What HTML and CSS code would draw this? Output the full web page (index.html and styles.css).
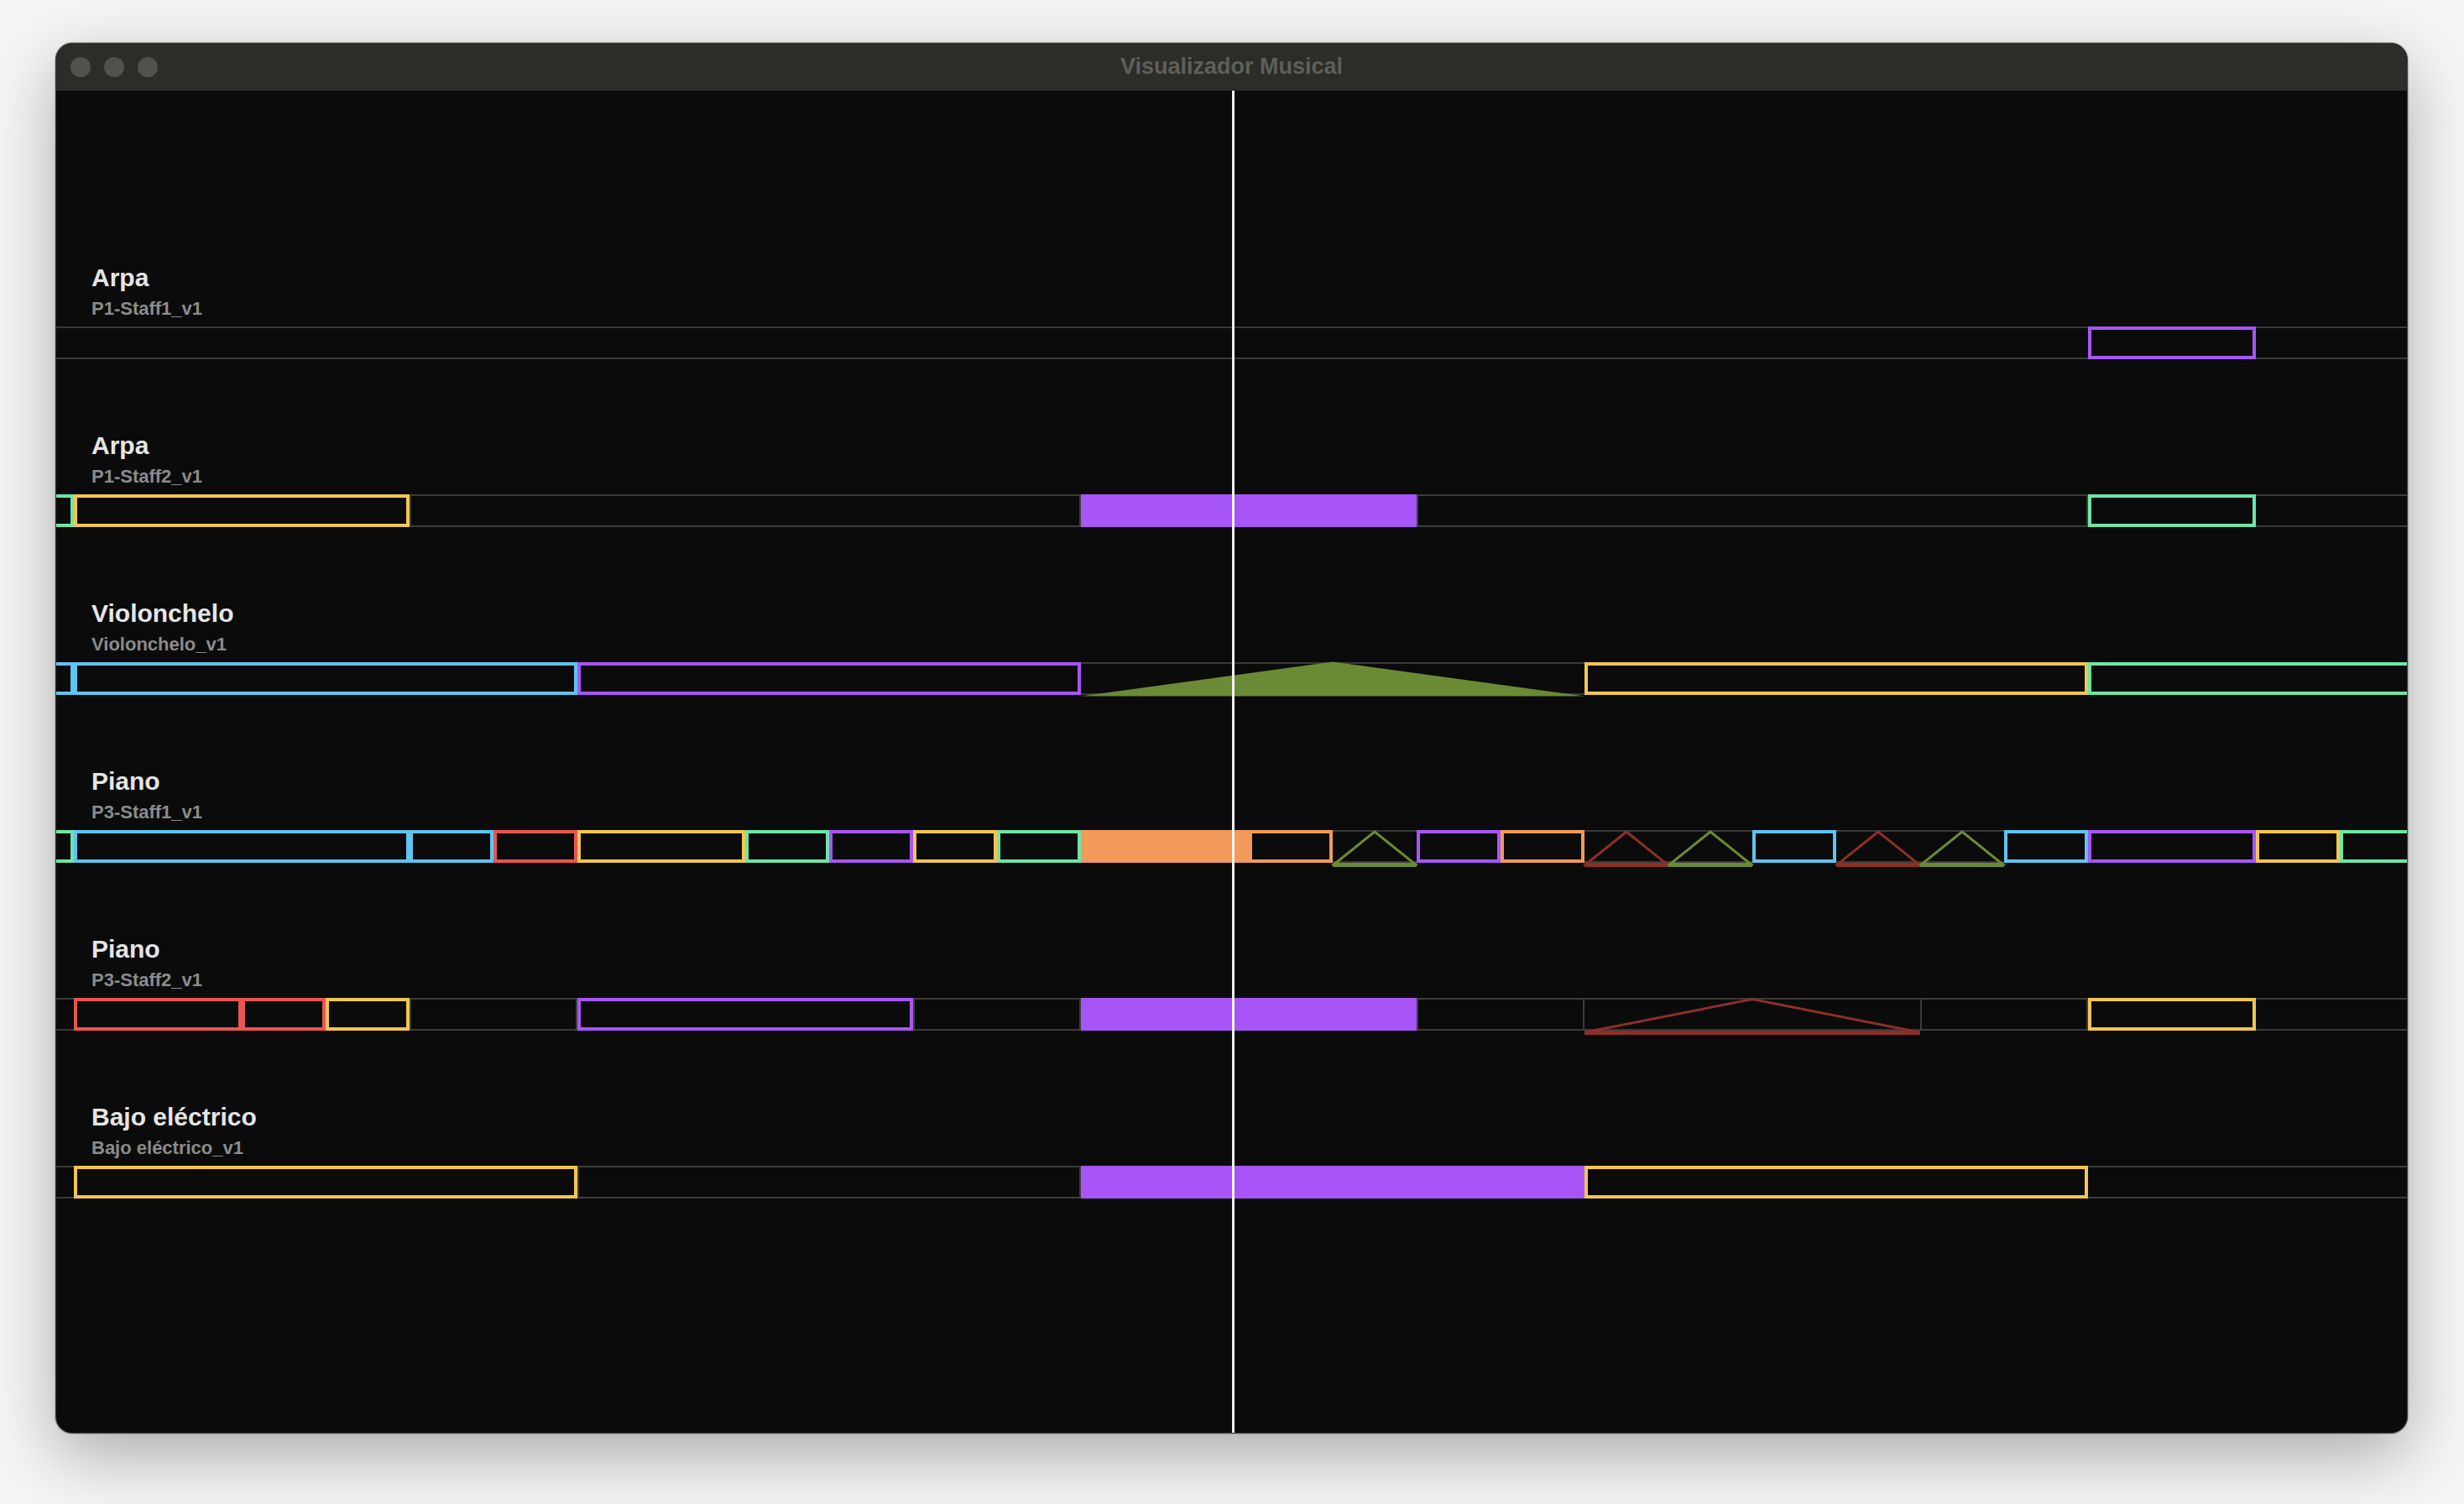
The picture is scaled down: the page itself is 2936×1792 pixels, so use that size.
FILE: index.html
```html
<!DOCTYPE html>
<html>
<head>
    <meta charset="UTF-8">
    <title>Visualizador Musical</title>
    <link rel="stylesheet" href="styles.css">
</head>
<body>
<div class="window">
    <div class="titlebar">
        <div class="lights"><span></span><span></span><span></span></div>
        <div class="title">Visualizador Musical</div>
        <div></div>
    </div>

    <div class="stage">
        <!-- cada pista: nombre, voz y la fila de notas (1 tiempo = 100px) -->
        <div class="track">
            <div class="name">Arpa</div>
            <div class="voice">P1-Staff1_v1</div>
            <div class="lane">
                <span class="lead"></span>
                <span class="gap" style="--n:24"></span>
                <span class="note purple" style="--n:2"></span>
            </div>
        </div>

        <div class="track">
            <div class="name">Arpa</div>
            <div class="voice">P1-Staff2_v1</div>
            <div class="lane">
                <span class="lead note mint"></span>
                <span class="note yellow" style="--n:4"></span>
                <span class="rest" style="--n:8"></span>
                <span class="note purple fill" style="--n:4"></span>
                <span class="rest" style="--n:8"></span>
                <span class="note mint" style="--n:2"></span>
            </div>
        </div>

        <div class="track">
            <div class="name">Violonchelo</div>
            <div class="voice">Violonchelo_v1</div>
            <div class="lane">
                <span class="lead note cyan"></span>
                <span class="note cyan" style="--n:6"></span>
                <span class="note purple" style="--n:6"></span>
                <span class="tri solid olive" style="--n:6"><svg width="600" height="39" viewBox="0 0 600 39"><polygon points="0,40.5 300,-0.5 600,40.5"/></svg></span>
                <span class="note yellow" style="--n:6"></span>
                <span class="note mint" style="--n:6"></span>
            </div>
        </div>

        <div class="track">
            <div class="name">Piano</div>
            <div class="voice">P3-Staff1_v1</div>
            <div class="lane">
                <span class="lead note mint"></span>
                <span class="note cyan" style="--n:4"></span>
                <span class="note cyan" style="--n:1"></span>
                <span class="note red" style="--n:1"></span>
                <span class="note yellow" style="--n:2"></span>
                <span class="note mint" style="--n:1"></span>
                <span class="note purple" style="--n:1"></span>
                <span class="note yellow" style="--n:1"></span>
                <span class="note mint" style="--n:1"></span>
                <span class="note orange fill" style="--n:2"></span>
                <span class="note orange" style="--n:1"></span>
                <span class="tri olive" style="--n:1"><svg width="100" height="39" viewBox="0 0 100 39"><polygon points="2,40.5 50,2 98,40.5"/><line x1="0" y1="41.5" x2="100" y2="41.5"/></svg></span>
                <span class="note purple" style="--n:1"></span>
                <span class="note orange" style="--n:1"></span>
                <span class="tri maroon" style="--n:1"><svg width="100" height="39" viewBox="0 0 100 39"><polygon points="2,40.5 50,2 98,40.5"/><line x1="0" y1="41.5" x2="100" y2="41.5"/></svg></span>
                <span class="tri olive" style="--n:1"><svg width="100" height="39" viewBox="0 0 100 39"><polygon points="2,40.5 50,2 98,40.5"/><line x1="0" y1="41.5" x2="100" y2="41.5"/></svg></span>
                <span class="note cyan" style="--n:1"></span>
                <span class="tri maroon" style="--n:1"><svg width="100" height="39" viewBox="0 0 100 39"><polygon points="2,40.5 50,2 98,40.5"/><line x1="0" y1="41.5" x2="100" y2="41.5"/></svg></span>
                <span class="tri olive" style="--n:1"><svg width="100" height="39" viewBox="0 0 100 39"><polygon points="2,40.5 50,2 98,40.5"/><line x1="0" y1="41.5" x2="100" y2="41.5"/></svg></span>
                <span class="note cyan" style="--n:1"></span>
                <span class="note purple" style="--n:2"></span>
                <span class="note yellow" style="--n:1"></span>
                <span class="note mint" style="--n:2"></span>
            </div>
        </div>

        <div class="track">
            <div class="name">Piano</div>
            <div class="voice">P3-Staff2_v1</div>
            <div class="lane">
                <span class="lead"></span>
                <span class="note red" style="--n:2"></span>
                <span class="note red" style="--n:1"></span>
                <span class="note yellow" style="--n:1"></span>
                <span class="rest" style="--n:2"></span>
                <span class="note purple" style="--n:4"></span>
                <span class="rest" style="--n:2"></span>
                <span class="note purple fill" style="--n:4"></span>
                <span class="rest" style="--n:2"></span>
                <span class="tri maroon" style="--n:4"><svg width="400" height="39" viewBox="0 0 400 39"><polygon points="3,40.5 200,1.5 397,40.5"/><line x1="0" y1="41.5" x2="400" y2="41.5"/></svg></span>
                <span class="rest" style="--n:2"></span>
                <span class="note yellow" style="--n:2"></span>
            </div>
        </div>

        <div class="track">
            <div class="name">Bajo eléctrico</div>
            <div class="voice">Bajo eléctrico_v1</div>
            <div class="lane">
                <span class="lead"></span>
                <span class="note yellow" style="--n:6"></span>
                <span class="rest" style="--n:6"></span>
                <span class="note purple fill" style="--n:6"></span>
                <span class="note yellow" style="--n:6"></span>
            </div>
        </div>

        <div class="playhead"></div>
    </div>
</div>
</body>
</html>
```

FILE: styles.css
```css
* {
    margin: 0;
    padding: 0;
    box-sizing: border-box;
}

html {
    min-height: 100%;
    background: #f5f5f5;
}

body {
    min-height: 100vh;
    padding: 51px 0 0 66px;
    background: #f5f5f5;
    font-family: "Liberation Sans", Arial, sans-serif;
}

.window {
    display: flex;
    flex-direction: column;
    width: 2803px;
    height: 1657px;
    border: 1px solid #3f3f3f;
    border-radius: 20px;
    overflow: hidden;
    background: #0b0b0b;
    box-shadow: 0 26px 80px rgba(0, 0, 0, .3), 0 0 0 1px rgba(0, 0, 0, .2);
}

/* barra de titulo */
.titlebar {
    display: grid;
    grid-template-columns: 1fr auto 1fr;
    align-items: center;
    flex-shrink: 0;
    height: 56px;
    background: #2c2c28;
}

.lights {
    display: flex;
    gap: 16px;
    padding-left: 17px;
}

.lights span {
    width: 24px;
    height: 24px;
    border-radius: 50%;
    background: #51524d;
}

.title {
    padding-bottom: 2px;
    font-size: 27px;
    line-height: 27px;
    font-weight: bold;
    color: #5e5f5a;
}

/* area de pistas */
.stage {
    position: relative;
    flex: 1;
    display: flex;
    flex-direction: column;
    gap: 88px;
    padding-top: 208px;
}

.name {
    padding-left: 42px;
    font-size: 30px;
    line-height: 30px;
    font-weight: bold;
    color: #e5e5e5;
}

.voice {
    margin-top: 11px;
    padding-left: 42px;
    font-size: 22px;
    line-height: 22px;
    font-weight: bold;
    color: #8b8b8b;
}

.lane {
    display: flex;
    margin-top: 10px;
    height: 39px;
    background:
        linear-gradient(#3a3a3a, #3a3a3a) top / 100% 2px no-repeat,
        linear-gradient(#3a3a3a, #3a3a3a) bottom / 100% 2px no-repeat;
}

.lane > span {
    flex-shrink: 0;
    width: calc(var(--n) * 100px);
    height: 100%;
}

.lane > .lead {
    width: 21px;
}

.note {
    border: 4px solid;
}

.lead.note {
    border-left: 0;
}

.fill {
    background: currentColor;
}

.rest {
    border: 2px solid #3c3c3c;
}

.tri svg {
    display: block;
    overflow: visible;
}

.tri polygon {
    fill: none;
    stroke: currentColor;
    stroke-width: 3;
}

.tri line {
    stroke: currentColor;
    stroke-width: 5;
}

.tri.solid polygon {
    fill: currentColor;
    stroke: none;
}

.yellow { color: #f3c650; }
.mint { color: #6ce6a6; }
.cyan { color: #5fc4f0; }
.purple { color: #a855f7; }
.orange { color: #f19a5a; }
.red { color: #eb5550; }
.olive { color: #6b8a35; }
.maroon { color: #8c2f27; }

.playhead {
    position: absolute;
    top: 0;
    bottom: 0;
    left: 1401px;
    width: 3px;
    background: #f4f4f4;
}
```
